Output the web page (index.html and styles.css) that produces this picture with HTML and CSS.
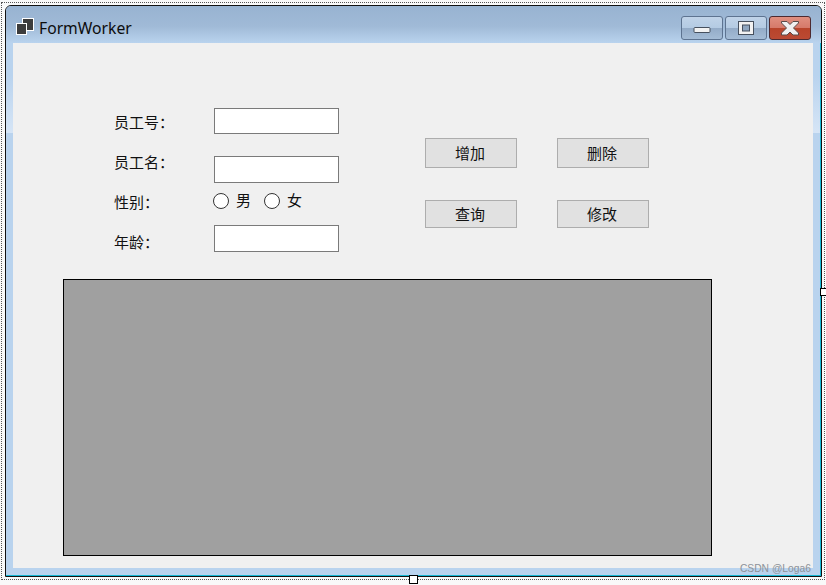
FILE: index.html
```html
<!DOCTYPE html>
<html lang="zh-CN">
  <head>
    <meta charset="UTF-8" />
    <meta name="viewport" content="width=device-width, initial-scale=1.0" />
    <title>FormWorker</title>
    <link rel="stylesheet" href="styles.css">
  </head>
  <body>
    <div class="designer">
      <div class="window">
        <div class="titlebar">
          <svg class="app-icon" width="20" height="18" viewBox="0 0 20 18">
            <rect x="7.5" y="0.5" width="11" height="12" fill="#3c3c3c" stroke="#fff" />
            <rect x="1.5" y="5.5" width="10" height="11" fill="#3c3c3c" stroke="#fff" />
          </svg>
          <span class="title">FormWorker</span>
          <div class="controls">
            <div class="ctl">
              <svg class="ctl-min" width="18" height="8" viewBox="0 0 18 8">
                <rect x="1" y="1.5" width="16" height="5" rx="1" fill="#f2f2f2" stroke="#46505e" />
              </svg>
            </div>
            <div class="ctl">
              <svg width="18" height="16" viewBox="0 0 18 16">
                <rect x="1.5" y="1.5" width="15" height="13" fill="#f2f2f2" stroke="#46505e" />
                <rect x="5.5" y="5" width="7" height="6" fill="#8fa6c0" stroke="#46505e" />
              </svg>
            </div>
            <div class="ctl ctl-close">
              <svg width="20" height="16" viewBox="0 0 20 16">
                <path d="M1.5 1.5h5.5l3 3 3-3h5.5v1.5l-5 5 5 5v2h-5.5l-3-3-3 3H1.5v-2l5-5-5-5z" fill="#f0f0f0" stroke="#5a4a48" />
              </svg>
            </div>
          </div>
        </div>

        <div class="client">
          <div class="top">
            <div class="labels">
              <label class="lbl">员工号：</label>
              <label class="lbl">员工名：</label>
              <label class="lbl">性别：</label>
              <label class="lbl">年龄：</label>
            </div>

            <div class="inputs">
              <input class="txt txt-first" type="text" />
              <input class="txt" type="text" />
              <div class="radios">
                <span class="radio"></span><span class="radio-text">男</span>
                <span class="radio"></span><span class="radio-text">女</span>
              </div>
              <input class="txt" type="text" />
            </div>

            <div class="actions">
              <button class="btn">增加</button>
              <button class="btn">删除</button>
              <button class="btn">查询</button>
              <button class="btn">修改</button>
            </div>
          </div>

          <div class="datagrid"></div>
        </div>

        <span class="watermark">CSDN @Loga6</span>
      </div>

      <span class="handle handle-right"></span>
      <span class="handle handle-bottom"></span>
    </div>
  </body>
</html>
```

FILE: styles.css
```css
html,
body {
  margin: 0;
  padding: 0;
}

body {
  width: 826px;
  height: 585px;
  overflow: hidden;
  background-color: #f9f9f9;
  font-family: "Noto Sans CJK SC", "Noto Sans", sans-serif;
  color: #111;
}

.designer {
  position: relative;
  box-sizing: border-box;
  width: 824px;
  height: 578px;
  margin: 2px 0 0 1px;
  padding: 2px 2px 2px 3px;
  border: 1px dotted #555;
}

.window {
  position: relative;
  box-sizing: border-box;
  height: 100%;
  display: flex;
  flex-direction: column;
  border: 1px solid #111;
  border-radius: 6px 6px 0 0;
  background: linear-gradient(#b9d3ee 70px, #d6e5f6 127px, #b9d3ee 127px);
  box-shadow: inset -1px -1px 0 #16b8d4;
}

.titlebar {
  flex: none;
  box-sizing: border-box;
  height: 37px;
  display: flex;
  align-items: flex-end;
  padding: 0 10px 3px 9px;
  border-radius: 5px 5px 0 0;
  background: linear-gradient(#98b3d1, #a0bad7 55%, #b9d3ee);
}

.app-icon {
  margin: 0 4px 4px 0;
}

.title {
  font-family: "Noto Sans", sans-serif;
  font-size: 15.7px;
  line-height: 24px;
  color: #0c0c0c;
}

.controls {
  margin-left: auto;
  display: flex;
  gap: 2px;
}

.ctl {
  box-sizing: border-box;
  width: 42px;
  height: 24px;
  display: flex;
  align-items: center;
  justify-content: center;
  border: 1px solid #5d7390;
  border-radius: 3px;
  background: linear-gradient(#c0d3e8 0, #b4cbe3 48%, #93abc7 50%, #a4bcd6);
}

.ctl-min {
  margin-top: 3px;
}

.ctl-close {
  border-color: #4d2a30;
  background: linear-gradient(#e08f80 0, #d67a6a 48%, #b8432a 50%, #bb4a33);
}

.client {
  flex: 1;
  min-height: 0;
  margin: 0 8px 8px 7px;
  padding-top: 65px;
  background-color: #f0f0f0;
}

.top {
  display: flex;
  padding-left: 101px;
}

.labels {
  width: 100px;
  display: flex;
  flex-direction: column;
  gap: 20px;
  padding-top: 4px;
}

.lbl {
  font-size: 15px;
  line-height: 20px;
}

.inputs {
  width: 125px;
  display: flex;
  flex-direction: column;
}

.txt {
  box-sizing: border-box;
  width: 125px;
  height: 27px;
  margin: 0;
  padding: 0;
  border: 1px solid #7a7a7a;
  background: #fff;
}

.txt-first {
  height: 26px;
  margin-bottom: 22px;
}

.radios {
  height: 22px;
  margin: 7px 0 13px -1px;
  display: flex;
  align-items: center;
}

.radio {
  box-sizing: border-box;
  width: 16px;
  height: 16px;
  border: 1px solid #333;
  border-radius: 50%;
  background: #fff;
}

.radio-text {
  font-size: 15px;
  line-height: 20px;
  margin: -2px 13px 0 7px;
}

.actions {
  display: grid;
  grid-template-columns: 92px 92px;
  grid-template-rows: 30px 28px;
  column-gap: 40px;
  row-gap: 32px;
  margin: 30px 0 0 86px;
  align-self: flex-start;
}

.btn {
  box-sizing: border-box;
  padding: 0 2px 2px 0;
  border: 1px solid #adadad;
  background: #e1e1e1;
  font-family: inherit;
  font-size: 15px;
  color: #111;
}

.datagrid {
  box-sizing: border-box;
  width: 649px;
  height: 277px;
  margin: 27px 0 0 50px;
  border: 1px solid #000;
  background: #a0a0a0;
}

.watermark {
  position: absolute;
  right: 10px;
  bottom: 1px;
  font-family: "Liberation Sans", sans-serif;
  font-size: 10.3px;
  line-height: 12px;
  color: #8d9299;
}

.handle {
  position: absolute;
  box-sizing: border-box;
  border: 1px solid #000;
  background: #fff;
}

.handle-right {
  right: -4px;
  top: 285px;
  width: 8px;
  height: 8px;
}

.handle-bottom {
  left: 407px;
  bottom: -5px;
  width: 9px;
  height: 9px;
}
```
